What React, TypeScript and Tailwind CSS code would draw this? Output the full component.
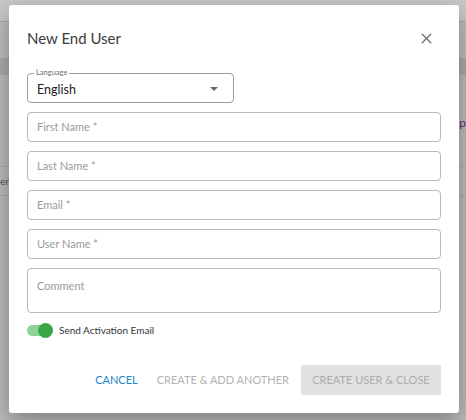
import { X } from 'lucide-react';

const font = { fontFamily: '"Lato", "Liberation Sans", sans-serif' };

function Field({ label, tall = false }: { label: string; tall?: boolean }) {
  return (
    <div
      className={`w-full border border-[#b8b8b8] rounded-[4px] px-[9px] text-[11px] text-[#9a9a9a] ${
        tall ? 'h-[45px] pt-[9px]' : 'h-[30px] flex items-center'
      }`}
    >
      {label}
    </div>
  );
}

export default function App() {
  return (
    <div className="relative w-[466px] h-[420px] overflow-hidden bg-[#bcbcbc]" style={font}>
      {/* page behind the overlay */}
      <div className="flex flex-col">
        <div className="h-[22px] bg-[#c9c9c9] border-b border-[#aaaaaa]" />
        <div className="h-[36px] bg-[#bfbfbf]" />
        <div className="h-[17px] bg-[#acacac]" />
        <div className="h-[91px] bg-[#bdbdbd] flex items-center justify-end pt-[4px]">
          <span className="text-[12px] text-[#5a2a6a]">Ap</span>
        </div>
        <div className="h-[30px] border-y border-[#adadad] bg-[#bdbdbd] flex items-center">
          <span className="text-[10px] text-[#555]">er</span>
        </div>
        <div className="h-[224px] bg-[#bdbdbd]" />
      </div>

      {/* modal */}
      <div className="absolute left-[9px] top-[5px] w-[450px] h-[408px] bg-white rounded-[3px] shadow-[0_8px_24px_rgba(0,0,0,0.35)] flex flex-col px-[18px]">
        <div className="flex items-center justify-between pt-[10px] h-[56px]">
          <h2 className="text-[15px] text-[#3c3c3c] leading-none">New End User</h2>
          <X className="w-[17px] h-[17px] text-[#6b6b6b] mr-[6px]" strokeWidth={1.8} />
        </div>

        <div className="mt-[12px] relative w-[207px] h-[30px] border border-[#9e9e9e] rounded-[4px] flex items-center justify-between px-[9px] pt-[4px]">
          <span className="absolute -top-[6px] left-[6px] bg-white px-[2px] text-[7.5px] leading-[10px] text-[#707070]">Language</span>
          <span className="text-[12.5px] text-[#222]">English</span>
          <span className="w-0 h-0 border-x-[4px] border-x-transparent border-t-[4px] border-t-[#666] mr-[6px] -mt-[3px]" />
        </div>

        <div className="flex flex-col gap-[9px] mt-[9px]">
          <Field label="First Name *" />
          <Field label="Last Name *" />
          <Field label="Email *" />
          <Field label="User Name *" />
          <Field label="Comment" tall />
        </div>

        <div className="flex items-center gap-[6px] mt-[10px]">
          <div className="relative w-[26px] h-[15px] flex items-center">
            <div className="w-[25px] h-[11px] rounded-full bg-[#8fd19a]" />
            <div className="absolute right-0 w-[15px] h-[15px] rounded-full bg-[#3aa646]" />
          </div>
          <span className="text-[10px] text-[#333]">Send Activation Email</span>
        </div>

        <div className="flex items-center justify-end mt-[27px] gap-[6px] text-[11px]">
          <button className="px-[6px] mr-[1px] h-[30px] text-[#1f85c4]">CANCEL</button>
          <button className="px-[6px] h-[30px] text-[#b3b3b3]">CREATE &amp; ADD ANOTHER</button>
          <button className="w-[140px] h-[30px] bg-[#e1e1e1] text-[#adadad] rounded-[2px]">CREATE USER &amp; CLOSE</button>
        </div>
      </div>
    </div>
  );
}
